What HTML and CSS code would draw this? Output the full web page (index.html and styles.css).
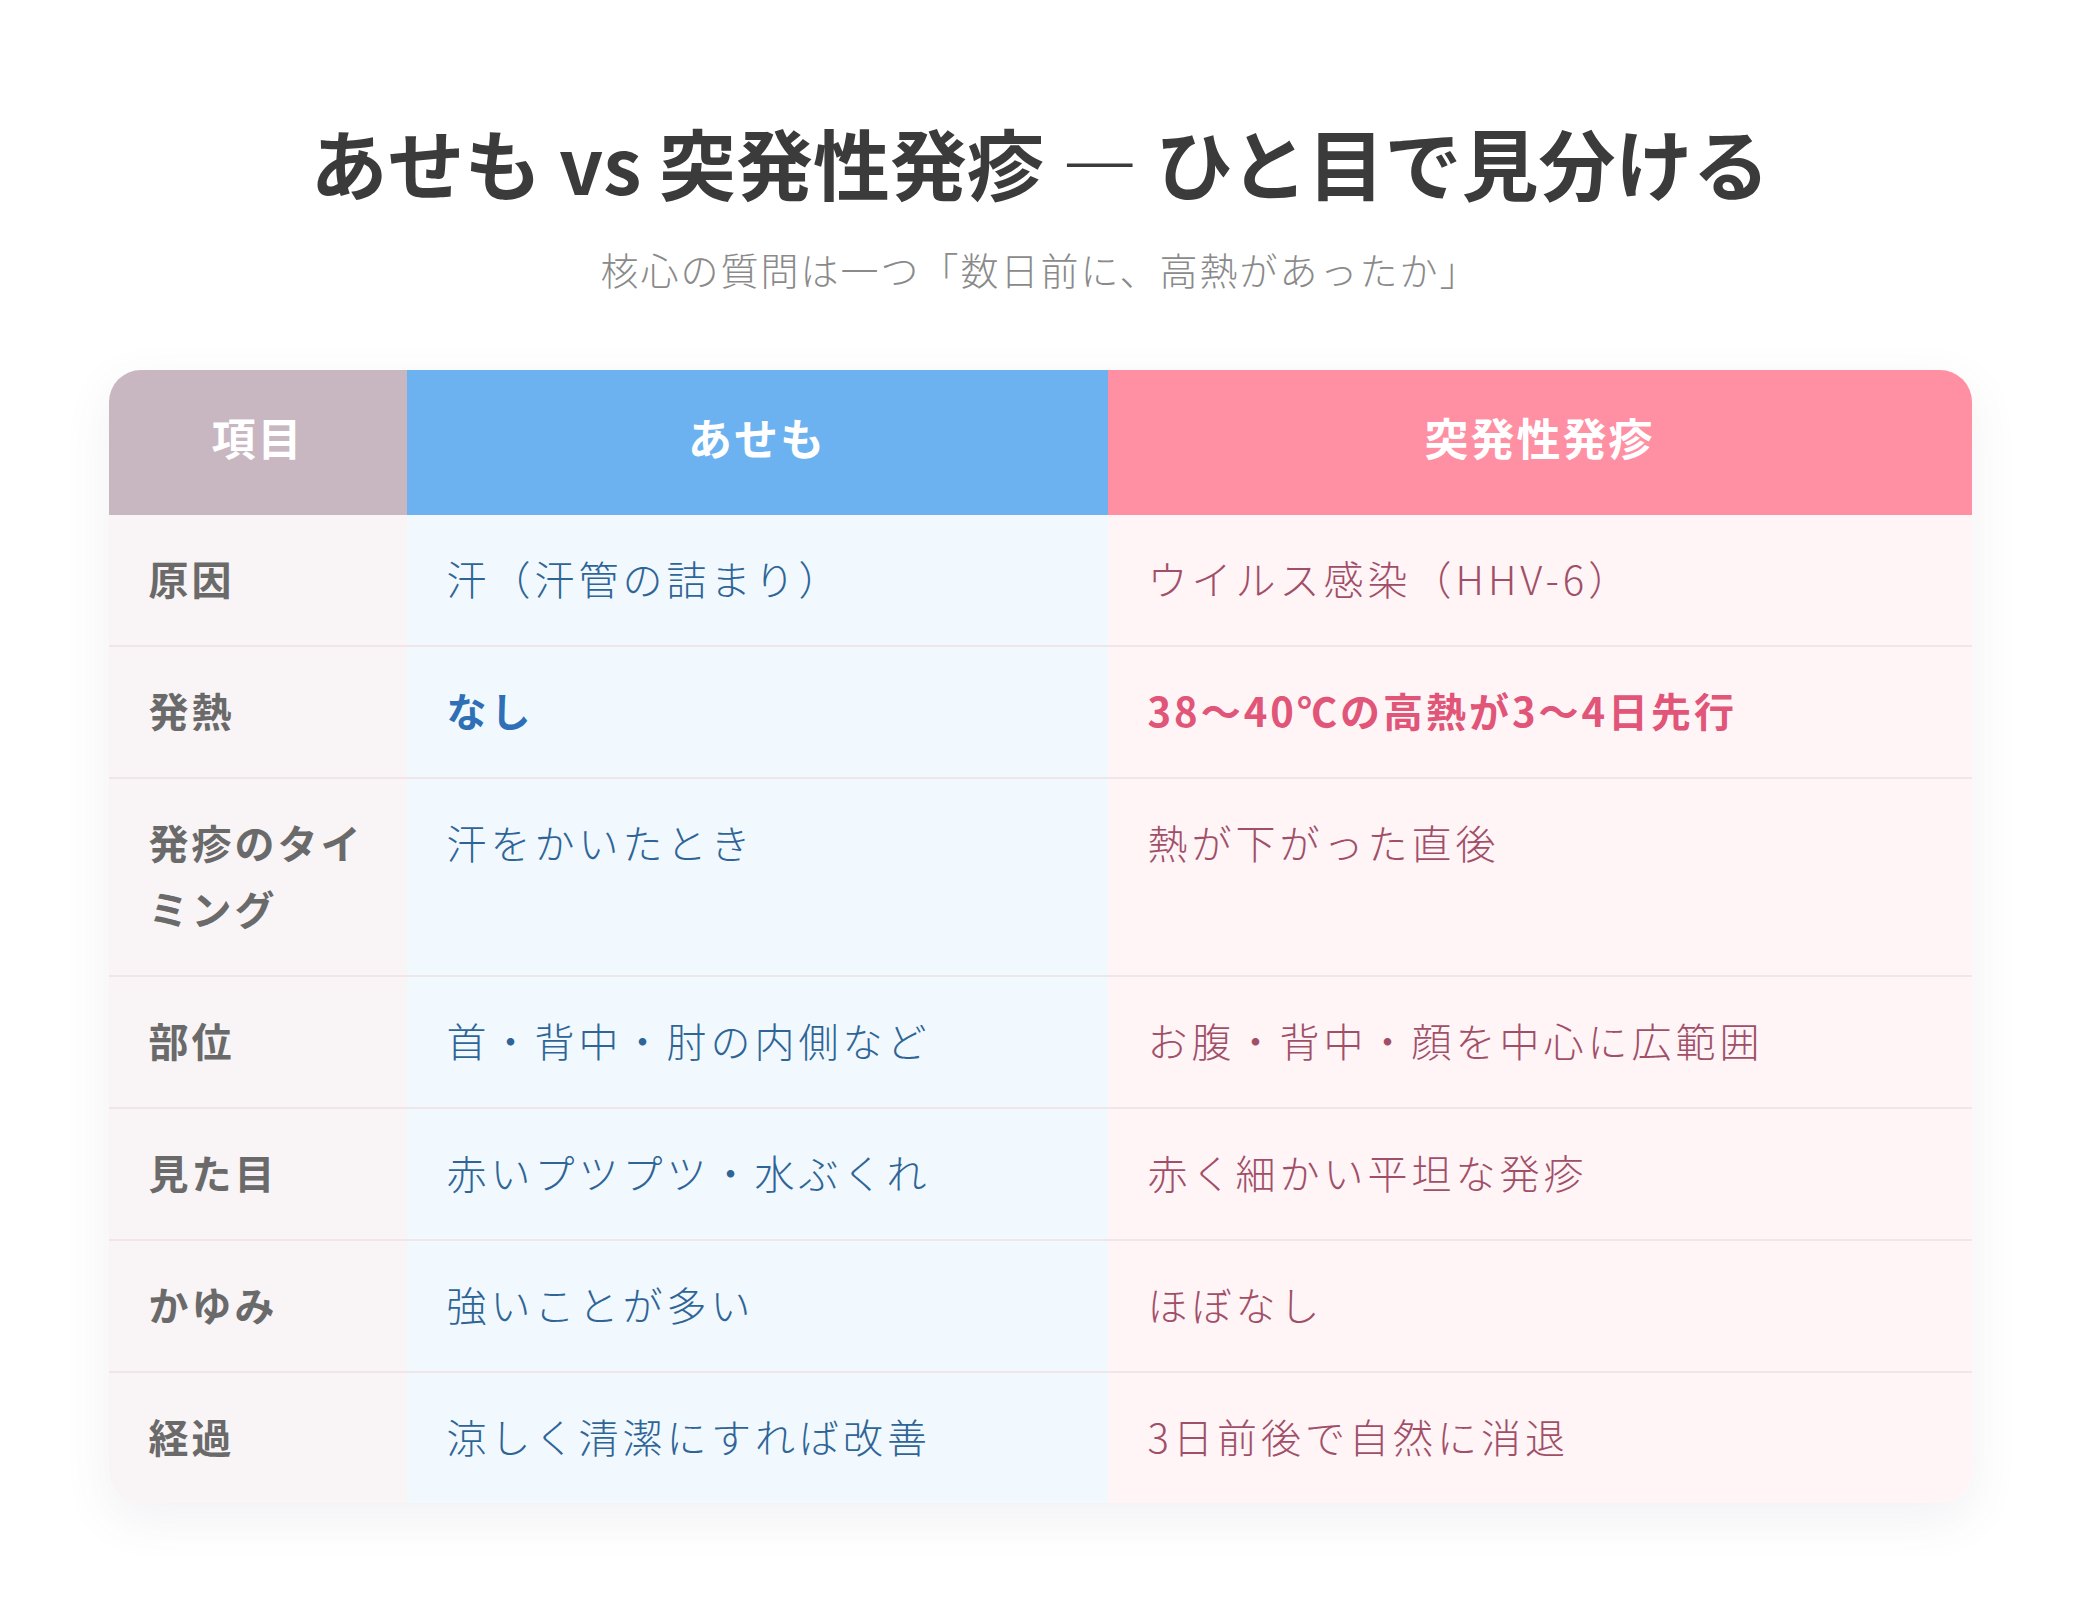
FILE: index.html
```html
<!DOCTYPE html>
<html lang="ja">
<head>
<meta charset="utf-8">
<title>あせも vs 突発性発疹</title>
<link rel="stylesheet" href="styles.css">
</head>
<body>
<main class="page">
  <h1 class="title">あせも vs 突発性発疹 — ひと目で見分ける</h1>
  <p class="subtitle">核心の質問は一つ「数日前に、高熱があったか」</p>
  <div class="card">
    <table class="compare">
      <thead>
        <tr>
          <th class="h-item">項目</th>
          <th class="h-asemo">あせも</th>
          <th class="h-toppatsu">突発性発疹</th>
        </tr>
      </thead>
      <tbody>
        <tr>
          <td class="label">原因</td>
          <td class="asemo">汗（汗管の詰まり）</td>
          <td class="toppatsu">ウイルス感染（HHV-6）</td>
        </tr>
        <tr>
          <td class="label">発熱</td>
          <td class="asemo"><strong class="em-blue">なし</strong></td>
          <td class="toppatsu"><strong class="em-pink">38〜40℃の高熱が3〜4日先行</strong></td>
        </tr>
        <tr>
          <td class="label">発疹のタイミング</td>
          <td class="asemo">汗をかいたとき</td>
          <td class="toppatsu">熱が下がった直後</td>
        </tr>
        <tr>
          <td class="label">部位</td>
          <td class="asemo">首・背中・肘の内側など</td>
          <td class="toppatsu">お腹・背中・顔を中心に広範囲</td>
        </tr>
        <tr>
          <td class="label">見た目</td>
          <td class="asemo">赤いプツプツ・水ぶくれ</td>
          <td class="toppatsu">赤く細かい平坦な発疹</td>
        </tr>
        <tr>
          <td class="label">かゆみ</td>
          <td class="asemo">強いことが多い</td>
          <td class="toppatsu">ほぼなし</td>
        </tr>
        <tr>
          <td class="label">経過</td>
          <td class="asemo">涼しく清潔にすれば改善</td>
          <td class="toppatsu">3日前後で自然に消退</td>
        </tr>
      </tbody>
    </table>
  </div>
</main>
</body>
</html>
```

FILE: styles.css
```css
html, body {
  margin: 0;
  padding: 0;
  background: #ffffff;
}

body {
  font-family: "Noto Sans CJK JP", "Noto Sans", sans-serif;
  color: #3a3a3a;
}

.page {
  width: 1863px;
  margin: 0 auto;
  padding-top: 112px;
  padding-bottom: 80px;
}

.title {
  margin: 0;
  text-align: center;
  font-size: 77px;
  line-height: 99px;
  font-weight: 700;
  color: #3b3b3b;
}

.subtitle {
  margin: 29px 0 73px;
  text-align: center;
  font-size: 38px;
  line-height: 57px;
  font-weight: 300;
  color: #8a8a8a;
  letter-spacing: 2px;
}

.card {
  border-radius: 32px;
  overflow: hidden;
  box-shadow: 0 16px 48px rgba(110, 90, 120, 0.09);
}

.compare {
  width: 100%;
  border-collapse: collapse;
  table-layout: fixed;
}

.compare th {
  padding: 35px 40px 45px;
  font-size: 44px;
  line-height: 65px;
  font-weight: 700;
  color: #ffffff;
  text-align: center;
  letter-spacing: 2px;
}

.h-item { width: 218px; background: #c8b7c1; }
.h-asemo { width: 621px; background: #6db2f0; }
.h-toppatsu { background: #ff8fa2; }

.compare td {
  padding: 30px 40px 34px;
  font-size: 40px;
  line-height: 66px;
  font-weight: 300;
  vertical-align: top;
  text-align: left;
  letter-spacing: 4px;
}

.compare tbody tr + tr td {
  border-top: 2px solid #f0e6ea;
}

.label {
  background: #f9f4f6;
  color: #6a6a6a;
  font-weight: 700 !important;
  letter-spacing: 3px !important;
}

.asemo {
  background: #f1f8fe;
  color: #2e6596;
}

.toppatsu {
  background: #fff4f6;
  color: #a14f68;
}

.em-blue {
  color: #2f6fb5;
  font-weight: 700;
}

.em-pink {
  color: #e05578;
  font-weight: 700;
  letter-spacing: 3px;
}
```
